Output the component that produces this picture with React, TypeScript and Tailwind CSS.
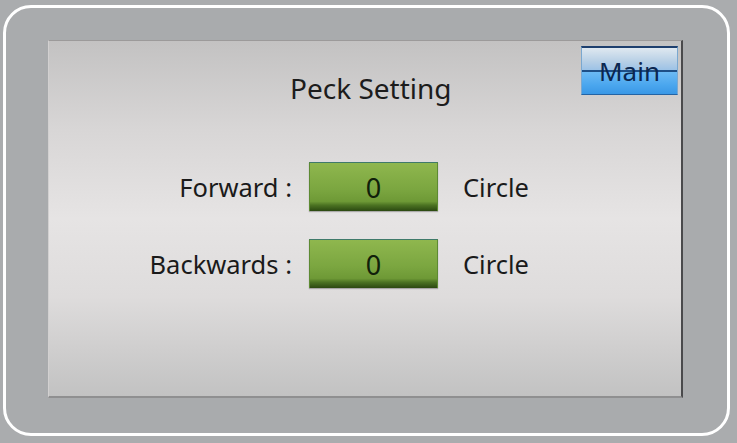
import React from "react";

const font = { fontFamily: '"Noto Sans", "Open Sans", Arial, sans-serif' };

function Row({ label, value }: { label: string; value: string }) {
  return (
    <div className="flex items-center">
      <div className="w-[243px] text-right text-[25.5px] text-[#1a1a1a] leading-[34px]">{label}</div>
      <div className="ml-[17px] w-[129px] h-[49px] flex items-center justify-center border-t border-t-[#3f7a6a] border-x border-x-[#5d8a33] bg-[linear-gradient(to_bottom,#8fb74e_0%,#7ba640_55%,#6e9936_80%,#4b7222_88%,#2b4811_100%)] shadow-[0_1px_1px_rgba(0,0,0,0.25)]">
        <span className="text-[27px] leading-none text-[#10200a]">{value}</span>
      </div>
      <div className="ml-[25px] text-[25.5px] text-[#1a1a1a] leading-[34px]">Circle</div>
    </div>
  );
}

export default function App() {
  return (
    <div
      style={font}
      className="w-[737px] h-[443px] bg-[#aaacae] pt-[5px] pl-[3px] pr-[7px] pb-[7px] overflow-hidden"
    >
      <div className="h-full rounded-[28px] border-[3px] border-white bg-[#a9abad] pl-[42px] pt-[32px]">
        <div className="w-[635px] h-[358px] border-t border-t-[#9c9a9a] border-l border-l-[#d2d0d0] border-b-2 border-b-[#8f8f90] border-r-2 border-r-[#4a4a4c] bg-[linear-gradient(to_bottom,#c3c2c2_0%,#d8d6d6_25%,#e6e4e4_50%,#dedcdc_72%,#c2c2c2_100%)]">
          <div className="flex items-start pt-[5px] pr-[3px]">
            <div className="ml-[241px] mt-[23px] text-[28px] leading-[38px] text-[#1c1c1c]">Peck Setting</div>
            <div className="ml-auto w-[97px] h-[49px] flex flex-col border-t-2 border-t-[#1e3f6e] border-b border-b-[#2464a4] border-x border-x-[#7aa8d0] relative">
              <div className="h-[22px] bg-[linear-gradient(to_bottom,#dfe8f0_0%,#b8d0e6_60%,#9cc2e6_100%)]" />
              <div className="h-[2px] bg-[#1e4f86]" />
              <div className="flex-1 bg-[linear-gradient(to_bottom,#6cbaf4_0%,#4aa6ee_60%,#3a98e6_100%)]" />
              <div className="absolute inset-0 flex items-center justify-center text-[26px] leading-none text-[#0b2750]">
                Main
              </div>
            </div>
          </div>
          <div className="mt-[55px] flex flex-col gap-[28px]">
            <Row label="Forward :" value="0" />
            <Row label="Backwards :" value="0" />
          </div>
        </div>
      </div>
    </div>
  );
}
